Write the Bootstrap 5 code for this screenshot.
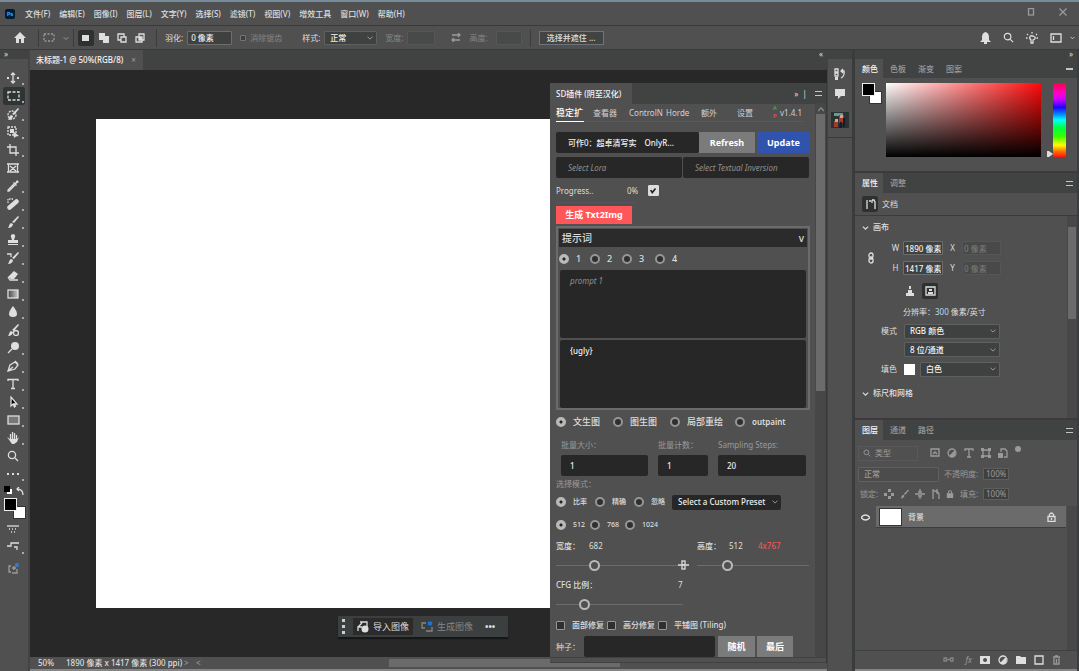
<!DOCTYPE html>
<html lang="zh-CN" data-bs-theme="dark">
<head>
<meta charset="utf-8">
<meta name="viewport" content="width=device-width, initial-scale=1">
<title>未标题-1 @ 50%(RGB/8)</title>
<link href="https://cdn.jsdelivr.net/npm/bootstrap@5.3.0/dist/css/bootstrap.min.css" rel="stylesheet">
<style>
:root{--panel:#505050;--bar:#414343;--ink:#282828;--line:#383b3b;--txt:#dedede;--dim:#9a9a9a}
body{font:8px/12px "Noto Sans","Noto Sans CJK SC",sans-serif;color:var(--txt);background:var(--panel);overflow:hidden}
a{color:inherit;text-decoration:none}
svg{display:block;flex:none;fill:none;stroke:currentColor;stroke-width:1.3}
svg .f{fill:currentColor;stroke:none}
svg.art path{stroke:none}
button{font:inherit;color:inherit;border:0;background:none;padding:0}
.w5{font-weight:500}.dimmed{color:var(--dim)}.faint{color:#858585}
.menubar{height:26px;border-top:2px solid #758b99;border-bottom:1px solid var(--line);padding-left:5px}
.menus{gap:9px;margin-left:10px}
.pslogo{width:10px;height:10px;border-radius:2px;background:#001d38;color:#36a5ff;font-size:6px;line-height:10px}
.optbar{height:24px;border-bottom:1px solid var(--line);padding-left:14px}
.sep{width:1px;height:18px;background:#3c3c3c}
.btn-ic{width:16px;height:16px;display:flex;align-items:center;justify-content:center;border-radius:2px}
.btn-ic.on{background:#2f3131}
.selmodes{gap:2px}
.form-control,.form-select{font-size:8px;line-height:12px;font-weight:500;padding:0 3px;min-height:0;height:14px;border-radius:1px;border:1px solid #6d6d6d;background-color:#3f4141;color:#f0f0f0}
.form-select{--bs-form-select-bg-img:url("data:image/svg+xml,%3csvg xmlns='http://www.w3.org/2000/svg' viewBox='0 0 8 8'%3e%3cpath d='M1 3l3 3 3-3' fill='none' stroke='%23bbb'/%3e%3c/svg%3e");background-size:6px;background-position:right 3px center;padding-left:5px;border-color:#5f6161}
.form-control:disabled{background:#484a4a;border-color:#565656;color:#777}
.form-control::placeholder{color:#8f8f8f;font-style:italic;font-weight:400}
.form-control.pct{width:26px;height:12px;padding:0 2px;color:#9a9a9a;font-weight:400;border-color:#5c605e}
.props .form-control{padding:0 1px}
.headbar{height:9px;background:var(--bar)}
.tabbar{background:var(--bar);height:20px;flex:none}
.ptab{padding:0 7px;display:flex;align-items:center;color:var(--dim);font-weight:500}
.ptab.on{background:var(--panel);color:#f5f5f5}
.burger{width:7px;height:5px;border:solid #c4c4c4;border-width:1px 0;margin-right:4px}
.toolbox{width:30px;border-right:2px solid #474245}
.toolbox button{width:22px;height:18px;margin-left:3px;padding-left:4px;position:relative;display:flex;align-items:center;border-radius:2px;flex:none}
.toolbox button.more::after{content:"";position:absolute;right:1px;bottom:2px;border:1px solid #aaa}
.toolbox button.on{background:#2f3434}
.fgbg{position:relative;width:22px;height:22px}
.fgbg i{position:absolute;width:13px;height:13px;border:1px solid #333}
.fgbg i:first-child{right:0;bottom:1px;background:#fff}
.fgbg i:last-child{left:0;top:0;background:#000;border-color:#eee}
.canvas{background:var(--ink);padding:49px 0 49px 66px}
.statusbar{height:14px;border-bottom:2px solid #858585;padding-left:8px}
.thumbbar{background:#6b6b6b;height:8px}
.ctxbar{position:absolute;left:308px;bottom:34px;height:21px;width:170px;background:#3c3f3f;box-shadow:0 2px 1px #171717;padding:0 4px;font-size:9px}
.grip{width:3px;height:15px;border-left:3px dotted #ccc}
.plugin{position:absolute;right:0;top:33px;bottom:8px;width:277px;background:var(--panel);border-right:1px solid var(--line)}
.plugin .body-area{padding:0 6px;width:265px;overflow:hidden}
.pgtabs{height:18px;border-bottom:1px solid #5d585d;margin-right:6px}
.pgtabs a{white-space:nowrap;line-height:17px;height:18px;color:#d0d0d0}
.pgtabs a.on{border-bottom:1px solid #fff;color:#fff;font-weight:500;font-size:9px}
.plugin .form-control.ink,.plugin .form-select.ink{background-color:#272727;border:0;border-radius:2px;padding-left:12px;height:21px}
.plugin .form-control.ink.narrow{padding-left:9px}
.plugin .btn{font-size:9px;line-height:12px;font-weight:700;padding:0;border:0;border-radius:0;color:#fff;height:21px;background:#7b7b7b}
.plugin .btn.blue{background:#3053ad}.plugin .btn.red{background:#ff5659;height:18px;width:76px}
.form-check-input{width:10px;height:10px;margin:0;flex:none;border:2px solid #969696;background:#2c3030}
.form-check-input[type=radio]:checked{background:radial-gradient(circle,#222 0 1px,#b9b9b9 2px);border-color:#b9b9b9}
.form-check-input[type=checkbox]{border-width:1px;border-radius:1px;width:9px;height:9px}
.form-check-input.lit{width:11px!important;height:11px!important}
.form-check-input.lit:checked{background:#dcdcdc url("data:image/svg+xml,%3csvg xmlns='http://www.w3.org/2000/svg' viewBox='0 0 11 11'%3e%3cpath d='M2 5l2 3 4-5' fill='none' stroke='%23222' stroke-width='2'/%3e%3c/svg%3e");border-color:#dcdcdc}
.rgrid{display:grid;align-items:center}
.rgrid label{font-weight:500;display:flex;align-items:center;gap:7px;white-space:nowrap}
.t7 label{font-size:7px}.t9 label{font-size:9px}
.pbox{border:2px solid #6b6b6b;height:184px;padding:1px;margin-right:-1px}
.pbox .hd{background:#2b2b2b;height:18px;font-size:10px;padding:0 3px}
.pbox textarea.form-control{background:#272727;border:0;border-radius:2px;height:68px;padding:5px 10px;resize:none;display:block;margin-left:1px;width:calc(100% - 2px)}
input[type=range]{appearance:none;background:none;height:12px;width:100%;margin:0;display:block}
input[type=range]::-webkit-slider-runnable-track{height:1px;background:#6a6e6a}
input[type=range]::-webkit-slider-thumb{appearance:none;width:11px;height:11px;margin-top:-5px;border:2px solid #bababa;border-radius:50%;background:var(--panel)}
.vscroll{position:absolute;right:0;top:20px;bottom:6px;width:11px;background:#474747;text-align:center}
.vscroll div{position:absolute;left:1px;right:1px;top:11px;height:50%;background:#6b6b6b}
.strip{width:28px;background:var(--bar);border-right:3px solid #3a3c3c}
.dock{width:224px;background:var(--panel);border-right:2px solid #3a3d3d}
.pnl{border-bottom:2px solid #3e393e}
.sv{height:74px;width:155px;background:linear-gradient(#0000,#000),linear-gradient(90deg,#fff,#ff0a0a)}
.hue{height:74px;width:13px;background:linear-gradient(#f04,#f0c 14%,#c0f 22%,#20f 33%,#08f 42%,#0ff 50%,#0f4 60%,#3f0 72%,#ff0 84%,#f70 92%,#f11)}
.form-select.mode{width:96px;height:15px}
.props{padding-left:7px}
.rowline{height:20px;display:flex;align-items:center}
.lab{width:36px;text-align:right;padding-right:7px;flex:none}
.layer{background:#6b6b6b;height:22px;border-bottom:1px solid #3d3d3d}
.vs2{position:absolute;right:0;top:0;bottom:0;width:10px;background:#484848}
.vs2 div{margin:11px 1px 0 1px;height:92px;background:#6b6b6b}
</style>
</head>
<body class="vh-100 d-flex flex-column">
<svg class="d-none">
<symbol id="chev" viewBox="0 0 8 8"><path d="M1 3l3 3 3-3"/></symbol>
<symbol id="search" viewBox="0 0 12 12"><circle cx="5" cy="5" r="3.6"/><path d="M8 8l3 3"/></symbol>
<symbol id="brush" viewBox="0 0 12 12"><path class="f" d="M11 0l1 1-5 6-2-1zM4 7l2 1c0 2-2 4-5 4 1-1 1-4 3-5z"/></symbol>
<symbol id="lock" viewBox="0 0 10 10"><path d="M3 5V3q0-2 2-2t2 2v2"/><path class="f" d="M1 4h8v6H1z"/></symbol>
<symbol id="half" viewBox="0 0 10 10"><circle cx="5" cy="5" r="4"/><path class="f" d="M8 2v6a4 4 0 0 1-6 0z"/></symbol>
<symbol id="chain" viewBox="0 0 8 12"><rect x="2" y="1" width="4" height="5" rx="2"/><rect x="2" y="6" width="4" height="5" rx="2"/><path d="M4 4v4"/></symbol>
</svg>

<header class="menubar d-flex align-items-center flex-shrink-0">
 <span class="pslogo text-center fw-bold">Ps</span>
 <nav class="menus d-flex w5 text-nowrap"><a href="#">文件(F)</a><a href="#">编辑(E)</a><a href="#">图像(I)</a><a href="#">图层(L)</a><a href="#">文字(Y)</a><a href="#">选择(S)</a><a href="#">滤镜(T)</a><a href="#">视图(V)</a><a href="#">增效工具</a><a href="#">窗口(W)</a><a href="#">帮助(H)</a></nav>
 <div class="ms-auto d-flex dimmed gap-4 pe-2 me-1 pb-1">
  <button aria-label="最大化"><svg width="8" height="8" viewBox="0 0 8 8"><rect x="1.500" y=".5" width="5" height="6.500"/></svg></button>
  <button aria-label="关闭"><svg width="8" height="8" viewBox="0 0 8 8"><path d="M.5.5l7 7m0-7l-7 7"/></svg></button>
 </div>
</header>

<div class="optbar d-flex align-items-center flex-shrink-0 text-nowrap">
 <button class="me-2" aria-label="主页"><svg width="12" height="12" viewBox="0 0 12 12"><path class="f" d="M6 0l6 6h-2v5H7V7H5v4H2V6H0z"/></svg></button>
 <span class="sep ms-1"></span>
 <button class="d-flex align-items-center gap-2 mx-1 dimmed" aria-label="矩形选框"><svg width="12" height="9" viewBox="0 0 12 9"><rect x="1" y="1" width="10" height="7" stroke-dasharray="2 1.500"/></svg><svg width="6" height="6"><use href="#chev"/></svg></button>
 <span class="sep"></span>
 <div class="selmodes d-flex ms-1">
  <button class="btn-ic on" aria-label="新选区"><svg width="8" height="8"><path class="f" d="M0 1h7v6H0z"/></svg></button>
  <button class="btn-ic" aria-label="添加到选区"><svg width="10" height="10"><path class="f" d="M0 0h6v3h4v7H4V7H0z"/></svg></button>
  <button class="btn-ic" aria-label="从选区减去"><svg width="10" height="10"><path d="M4 7H1V1h6v3M4 4h5v5H4z"/></svg></button>
  <button class="btn-ic" aria-label="与选区交叉"><svg width="10" height="10"><path d="M4 1h5v6H4zM1 4h6v5H1z"/><path class="f" d="M4 4h3v3H4z"/></svg></button>
 </div>
 <span class="sep mx-2"></span>
 <label for="feather" class="me-1">羽化:</label><input id="feather" class="form-control" style="width:45px" value="0 像素">
 <label class="d-flex gap-1 ms-2 align-items-center faint"><input type="checkbox" disabled class="form-check-input" style="width:6px;height:6px"> 消除锯齿</label>
 <label for="stl" class="ms-3 ps-1 me-1">样式:</label><select id="stl" class="form-select me-2" style="width:53px"><option>正常</option></select>
 <label for="ow" class="faint me-1">宽度:</label><input id="ow" disabled class="form-control" style="width:28px">
 <button class="ms-3 me-2 dimmed" aria-label="交换"><svg width="10" height="9" viewBox="0 0 10 9"><path d="M1 2h8M7 0l2 2-2 2M9 7H1m2-2L1 7l2 2"/></svg></button>
 <label for="oh" class="faint me-2">高度:</label><input id="oh" disabled class="form-control" style="width:26px">
 <span class="sep mx-2"></span>
 <button class="w5 border border-secondary text-center" style="width:65px;background:#424444">选择并遮住 ...</button>
 <div class="ms-auto d-flex align-items-center gap-2 pe-1">
  <button class="me-1" aria-label="通知"><svg width="11" height="12" viewBox="0 0 11 12"><path class="f" d="M5.500 0Q9 1 9 5v3l2 2H0l2-2V5q0-4 3.500-5zM4 10h3v2H4z"/></svg></button>
  <button class="me-1" aria-label="搜索"><svg width="11" height="11"><use href="#search"/></svg></button>
  <button class="me-1" aria-label="提示"><svg width="12" height="12" viewBox="0 0 12 12"><path d="M5 8Q3 6 4 4.500t4 0T7 8v3H5zM6 0v1.500M1 2l1 1M11 2l-1 1M0 6h1.500M10.500 6H12"/></svg></button>
  <button class="d-flex align-items-center gap-2" aria-label="工作区"><svg width="12" height="10"><path d="M1 1h10v8H1zM3.500 3v4"/></svg><svg width="5" height="5"><use href="#chev"/></svg></button>
 </div>
</div>

<main class="d-flex flex-fill" style="min-height:0">
 <aside class="toolbox d-flex flex-column flex-shrink-0">
  <div class="headbar ps-1" style="line-height:7px">»</div><div style="height:10px"></div>
  <button class="more" aria-label="移动"><svg width="12" height="12" viewBox="0 0 12 12"><path d="M6 1v10M4 3l2-2 2 2M4 9l2 2 2-2"/><path class="f" d="M0 5h2v2H0zM10 5h2v2h-2z"/></svg></button>
  <button class="more on" aria-label="选框"><svg width="13" height="10"><rect x="1" y="1" width="11" height="8" stroke-dasharray="3 1.500"/></svg></button>
  <button class="more" aria-label="快速选择"><svg width="12" height="12"><circle cx="5" cy="7" r="4" stroke-dasharray="2 1"/><use href="#brush" width="12" height="12"/></svg></button>
  <button class="more" aria-label="对象选择"><svg width="12" height="12"><rect x="1" y="1" width="8" height="8" stroke-dasharray="2 1"/><path class="f" d="M3 3h4v4H3zM6 5l6 5-3 .5L7 12z"/></svg></button>
  <button class="more" aria-label="裁剪"><svg width="12" height="12"><path d="M0 3h9v9M3 0v9h9"/></svg></button>
  <button aria-label="图框"><svg width="12" height="10"><path d="M0 1h12M0 9h12M1.500 1v8M10.500 1v8M3 3l6 5M9 3L3 8"/></svg></button>
  <button class="more" aria-label="吸管"><svg width="12" height="12"><path d="M7 4l-6 6v1h1l6-6"/><path class="f" d="M6 3l1-1 1 1 2-3 2 2-3 2 1 1-1 1z"/></svg></button>
  <button class="more" aria-label="修复"><svg width="12" height="12"><path d="M1 5V1h5" stroke-dasharray="1.500 1"/><path d="M2.500 9.500l7-6" stroke-width="4.500" stroke-linecap="round"/></svg></button>
  <button class="more" aria-label="画笔"><svg width="12" height="12"><use href="#brush"/></svg></button>
  <button class="more" aria-label="图章"><svg width="12" height="12"><path class="f" d="M6 0q3 1 2 3L7 6h4v3H1V6h4L4 3q-1-2 2-3zM1 10h10v1H1z"/></svg></button>
  <button class="more" aria-label="历史画笔"><svg width="12" height="12"><use href="#brush"/><path d="M0 2h4v3"/></svg></button>
  <button class="more" aria-label="橡皮擦"><svg width="12" height="12"><path class="f" d="M7 1l4 3-4 5H4L1 7z"/><path d="M1 7l2 3h8"/></svg></button>
  <button class="more" aria-label="渐变"><svg width="12" height="10"><defs><linearGradient id="gg"><stop stop-color="#444"/><stop offset="1" stop-color="#ccc"/></linearGradient></defs><rect x="1" y="1" width="10" height="8" style="fill:url(#gg)"/></svg></button>
  <button class="more" aria-label="模糊"><svg width="12" height="12"><path class="f" d="M6 0q4 5 4 8 0 3-4 3T2 8q0-3 4-8z"/></svg></button>
  <button aria-label="混合器"><svg width="12" height="12"><use href="#brush"/><circle cx="9" cy="9" r="2.500"/></svg></button>
  <button class="more" aria-label="减淡"><svg width="12" height="12"><circle class="f" cx="8" cy="4" r="4"/><path d="M5 7l-4 4"/></svg></button>
  <button class="more" aria-label="钢笔"><svg width="12" height="12"><path d="M1 11l2-6 5-3 3 3-3 4zM1 11l5-4"/><path d="M8 1l3 3"/></svg></button>
  <button class="more" aria-label="文字"><svg width="12" height="12"><path d="M1 3V1.500h10V3M6 1v10M4 10.500h4"/></svg></button>
  <button class="more" aria-label="选择"><svg width="12" height="12"><path style="fill:#000" d="M4 1v9l2-2 1.500 3 1-1-1.500-2h3z"/></svg></button>
  <button class="more" aria-label="矩形"><svg width="13" height="10"><rect x="1" y="1" width="11" height="8" style="fill:#777"/></svg></button>
  <button class="more" aria-label="抓手"><svg width="12" height="12"><path class="f" d="M0 5l3 2h7l2-2-2 5-3 2H5z"/><path d="M3.500 7V2M5.500 7V0M7.500 7V1M9.500 7V3"/></svg></button>
  <button aria-label="缩放"><svg width="12" height="12"><use href="#search"/></svg></button>
  <button class="more" aria-label="更多"><svg width="12" height="3"><path class="f" d="M0 0h2v2H0zM5 0h2v2H5zM10 0h2v2h-2z"/></svg></button>
  <div class="d-flex align-items-center justify-content-between px-1" style="height:15px"><svg width="9" height="9"><path style="fill:#fff" stroke="none" d="M3 3h5v5H3z"/><path style="fill:#000;stroke:none" d="M0 0h6v6H0z"/></svg><svg width="8" height="8"><path d="M7 8q0-6-6-6M3 0L1 2l2 2"/></svg></div>
  <div class="fgbg ms-1"><i></i><i></i></div>
  <button aria-label="快速蒙版"><svg width="12" height="9"><path d="M0 1h12"/><path d="M2 4h8M4 7h5" stroke-dasharray="1 2"/></svg></button>
  <button class="more" aria-label="屏幕模式"><svg width="12" height="10"><path d="M0 4h4V1h8M7 5h3v3"/></svg></button>
  <button class="dimmed mt-1" aria-label="生成"><svg width="13" height="12"><path d="M4 3H2v6h2M10 6v4H5M7 3v4M5 5h4"/><circle cx="10" cy="2" r="2.200" style="fill:#3b74b8;stroke:none"/></svg></button>
 </aside>

 <section class="flex-fill d-flex flex-column position-relative" style="min-width:0">
  <div class="tabbar d-flex"><a href="#" class="ptab on" style="padding-left:6px;width:113px">未标题-1 @ 50%(RGB/8) <span class="ms-2 dimmed">×</span></a><span class="ms-auto me-1" style="line-height:7px">«</span></div>
  <div class="canvas flex-fill"><div class="bg-white h-100"></div></div>
  <div class="ctxbar d-flex align-items-center gap-2">
   <span class="grip"></span>
   <button class="d-flex align-items-center gap-1 px-1" style="background:#2b2b2b;height:17px"><svg width="12" height="12"><path d="M3 1h7v5M1 6l4-4M1 10V6h4"/><circle class="f" cx="8" cy="8" r="3.500"/></svg>导入图像</button>
   <button class="d-flex align-items-center gap-1 faint"><svg width="12" height="12"><path d="M5 2H1v5h3M5 10h6V6"/><circle cx="9" cy="2.500" r="2.300" style="fill:#1473e6;stroke:none"/></svg>生成图像</button>
   <button class="ms-1 fw-bold" aria-label="更多选项">•••</button>
  </div>
  <footer class="statusbar d-flex align-items-center flex-shrink-0 w5">
   <span style="width:28px">50%</span><span style="width:118px">1890 像素 x 1417 像素 (300 ppi)</span><span class="dimmed" style="width:12px">&gt;</span><span class="dimmed">&lt;</span>
   <div class="flex-fill d-flex"><div style="width:30%"></div><div class="thumbbar" style="width:37%"></div></div>
  </footer>

  <section class="plugin d-flex flex-column">
   <div class="tabbar d-flex align-items-center" style="height:21px"><a href="#" class="ptab on h-100" style="padding-left:6px;width:82px">SD插件 (阴至汉化)</a><span class="ms-auto me-2">»&nbsp; |</span><span class="burger"></span></div>
   <div class="body-area flex-fill">
    <nav class="pgtabs d-flex"><a href="#" class="on" style="width:28px;margin-right:9px">稳定扩</a><a href="#" style="width:36px">查看器</a><a href="#" style="width:37px">ControlN</a><a href="#" style="width:35px">Horde</a><a href="#" style="width:36px">额外</a><a href="#" style="width:36px">设置</a><span style="width:7px;font-size:6px;line-height:8px;color:#ff5659"><span style="color:#53b26a">A</span><br>P</span><a href="#">v1.4.1</a></nav>
    <div class="d-flex" style="margin:10px -1px 0 0"><select aria-label="模型" class="form-select ink flex-fill" style="background-image:none"><option>可作0：超卓清写实　OnlyR...</option></select><button class="btn" style="width:56px;flex:none">Refresh</button><button class="btn blue" style="width:53px;flex:none;margin-left:2px">Update</button></div>
    <div class="d-flex" style="gap:1px;margin-top:4px"><input aria-label="Lora" class="form-control ink" placeholder="Select Lora"><input aria-label="Textual Inversion" class="form-control ink" placeholder="Select Textual Inversion"></div>
    <div class="rgrid" style="grid-template-columns:71px 21px 1fr;height:23px;margin-top:1px"><span>Progress..</span><span>0%</span><input type="checkbox" aria-label="预览" class="form-check-input lit" checked></div>
    <div style="width:80px;border-top:1px solid #5a535a;height:4px"></div>
    <button class="btn red d-block">生成 Txt2Img</button>
    <div class="pbox" style="margin-top:2px">
     <button class="hd d-flex w-100 align-items-center justify-content-between w5"><span>提示词</span><span>v</span></button>
     <div class="rgrid t9" style="grid-template-columns:31px 32px 33px 1fr;height:23px"><label><input type="radio" name="n" class="form-check-input" checked>1</label><label><input type="radio" name="n" class="form-check-input">2</label><label><input type="radio" name="n" class="form-check-input">3</label><label><input type="radio" name="n" class="form-check-input">4</label></div>
     <textarea aria-label="prompt" class="form-control" placeholder="prompt 1" style="margin-bottom:2px"></textarea>
     <textarea aria-label="negative prompt" class="form-control">{ugly}</textarea>
    </div>
    <div class="rgrid t9" style="grid-template-columns:57px 57px 65px 1fr;height:24px"><label><input type="radio" name="m" class="form-check-input" checked>文生图</label><label><input type="radio" name="m" class="form-check-input">图生图</label><label><input type="radio" name="m" class="form-check-input">局部重绘</label><label style="font-size:8px;font-weight:600"><input type="radio" name="m" class="form-check-input">outpaint</label></div>
    <div class="d-grid" style="grid-template-columns:87px 50px 88px;column-gap:10px;margin:5px 0 2px 5px"><label class="dimmed" for="bs" style="height:16px">批量大小：</label><label class="dimmed" for="bc">批量计数：</label><label class="dimmed text-nowrap" for="ss">Sampling Steps:</label><input id="bs" class="form-control ink narrow" value="1"><input id="bc" class="form-control ink narrow" value="1"><input id="ss" class="form-control ink narrow" value="20"></div>
    <div class="dimmed">选择模式：</div>
    <div class="rgrid t7" style="grid-template-columns:39px 39px 38px 109px;height:24px"><label><input type="radio" name="s" class="form-check-input" checked>比率</label><label><input type="radio" name="s" class="form-check-input">精确</label><label><input type="radio" name="s" class="form-check-input">忽略</label><select aria-label="预设" class="form-select ink" style="height:15px;padding-left:6px"><option>Select a Custom Preset</option></select></div>
    <div class="rgrid t7" style="grid-template-columns:34px 35px 1fr;height:22px"><label><input type="radio" name="r" class="form-check-input" checked>512</label><label><input type="radio" name="r" class="form-check-input">768</label><label><input type="radio" name="r" class="form-check-input">1024</label></div>
    <div class="rgrid" style="grid-template-columns:33px 108px 32px 29px 1fr;height:19px"><label for="wd">宽度：</label><span>682</span><label for="ht">高度：</label><span>512</span><span style="color:#ff5659">4x767</span></div>
    <div class="rgrid" style="grid-template-columns:122px 19px 1fr;height:20px"><input id="wd" type="range" value="30"><svg width="11" height="10" viewBox="0 0 11 10"><path d="M0 5h3M8 5h3"/><rect x="4" y="1" width="3" height="4"/><rect x="4" y="5" width="3" height="4"/></svg><input id="ht" type="range" value="25"></div>
    <div class="rgrid" style="grid-template-columns:122px 1fr;height:19px"><label for="cfg">CFG 比例：</label><span>7</span></div>
    <div style="width:127px;padding:4px 0"><input id="cfg" type="range" value="20"></div>
    <div class="rgrid" style="grid-template-columns:51px 51px 1fr;height:22px"><label><input type="checkbox" class="form-check-input">面部修复</label><label><input type="checkbox" class="form-check-input">高分修复</label><label><input type="checkbox" class="form-check-input">平铺图 (Tiling)</label></div>
    <div class="d-flex align-items-center"><label for="seed" style="width:28px;flex:none">种子：</label><input id="seed" class="form-control ink" style="width:131px"><button class="btn" style="width:37px;margin-left:3px">随机</button><button class="btn" style="width:36px;margin-left:2px">最后</button></div>
   </div>
   <div style="height:6px;border:solid #3e4242;border-width:1px 0;flex:none;margin-top:auto"></div>
   <div class="vscroll"><div></div><svg class="mx-auto mt-1" width="6" height="6" viewBox="0 0 6 6"><path d="M0 4l3-3 3 3" stroke="#888"/></svg></div>
  </section>
 </section>

 <aside class="strip flex-shrink-0 d-flex flex-column"><div class="headbar"></div>
  <div class="flex-fill d-flex flex-column align-items-center gap-2" style="background:var(--panel);padding-top:9px;margin-left:1px">
   <button aria-label="历史记录"><svg width="12" height="13"><path d="M1 1h3v3H1zM1 5h3v3H1z"/><path class="f" d="M1 9h3v3H1z"/><path d="M7 3h3q1 5-3 7M9 1L7 3l2 2"/></svg></button>
   <button aria-label="注释"><svg width="11" height="10"><path class="f" d="M0 0h10v7H6L3 10V7H0z"/></svg></button>
   <button aria-label="SD插件" class="mt-1"><svg class="art" width="18" height="18"><path fill="#293333" d="M0 1h18v16H0z"/><path fill="#6a9998" d="M3 2h9v3H3z"/><path fill="#a4382c" d="M8 4h5v8H8zM3 10h4v6H3z"/><path fill="#e7a06d" d="M9 4h3v3H9zM4 8h3v3H4z"/><path fill="#171a28" d="M9 11h2v6H8zM12 7h2v9h-2z"/></svg></button>
   <div class="w-100" style="border-top:1px solid #363a3a"></div>
  </div>
 </aside>

 <aside class="dock flex-shrink-0 d-flex flex-column">
  <div class="headbar text-end pe-1" style="line-height:7px">»</div>
  <section class="pnl" style="height:114px"><nav class="tabbar d-flex align-items-center" style="height:19px"><a href="#" class="ptab on h-100" style="padding-right:5px">颜色</a><a href="#" class="ptab">色板</a><a href="#" class="ptab" style="padding-left:5px">渐变</a><a href="#" class="ptab" style="padding-left:5px">图案</a><span class="burger ms-auto" style="height:2px"></span></nav>
   <div class="d-flex" style="padding:5px 0 0 7px"><div class="fgbg me-1" style="width:20px"><i></i><i></i></div><div class="sv"></div><div class="d-flex align-items-end" style="width:12px;padding-left:6px"><svg width="6" height="6"><path class="f" d="M0 0h2l4 3-4 3H0z"/></svg></div><div class="hue"></div></div></section>
  <section class="pnl d-flex flex-column" style="height:247px"><nav class="tabbar d-flex align-items-center"><a href="#" class="ptab on h-100" style="padding-right:5px">属性</a><a href="#" class="ptab">调整</a><span class="burger ms-auto"></span></nav>
   <div class="d-flex align-items-center props gap-1" style="height:23px;border-bottom:1px solid #3e393e"><span class="btn-ic on"><svg width="11" height="11"><path d="M2 1v9M4 2h2M7 1h2l1 2v7M7 1v3"/></svg></span>文档</div>
   <div class="position-relative flex-fill props">
    <div class="rowline w5" style="height:22px"><svg class="me-1" width="7" height="7"><use href="#chev"/></svg>画布</div>
    <div class="d-flex"><svg class="align-self-center" style="margin-left:5px" width="8" height="12"><use href="#chain"/></svg><div style="margin-left:13px">
     <div class="rowline"><label for="pw" style="width:15px" class="text-center">W</label><input id="pw" class="form-control" style="width:40px" value="1890 像素"><label for="px" style="width:19px" class="text-center">X</label><input id="px" disabled class="form-control" style="width:39px" value="0 像素"></div>
     <div class="rowline"><label for="ph" style="width:15px" class="text-center">H</label><input id="ph" class="form-control" style="width:40px" value="1417 像素"><label for="py" style="width:19px" class="text-center">Y</label><input id="py" disabled class="form-control" style="width:39px" value="0 像素"></div></div></div>
    <div class="d-flex align-items-center gap-1" style="height:26px;padding-left:40px"><button class="btn-ic" aria-label="纵向"><svg width="10" height="10"><path class="f" d="M4 0h2v3H4zM3 4h4v3h2v3H1V7h2z"/></svg></button><button class="btn-ic on" aria-label="横向"><svg width="11" height="10"><path d="M1 9V1h9v8z"/><path class="f" d="M4 3h3v2H4zM3 6h5v2H3z"/></svg></button></div>
    <div style="padding-left:41px;height:18px;line-height:16px">分辨率：<span style="color:#b5d9f5">300</span> 像素/英寸</div>
    <div class="rowline" style="height:18px"><label class="lab" for="md" style="width:42px">模式</label><select id="md" class="form-select mode"><option>RGB 颜色</option></select></div>
    <div class="rowline" style="height:19px;padding-left:42px"><select aria-label="位深度" class="form-select mode"><option>8 位/通道</option></select></div>
    <div class="rowline"><label class="lab" for="fc" style="width:42px">填色</label><span class="bg-white" style="width:11px;height:11px;margin-right:5px"></span><select id="fc" class="form-select" style="width:80px;height:15px"><option>白色</option></select></div>
    <div class="rowline w5" style="height:28px"><svg class="me-1" width="7" height="7"><use href="#chev"/></svg>标尺和网格</div>
    <div class="vs2"><div></div></div>
   </div></section>
  <section class="flex-fill d-flex flex-column"><nav class="tabbar d-flex align-items-center"><a href="#" class="ptab on h-100" style="padding-right:5px">图层</a><a href="#" class="ptab">通道</a><a href="#" class="ptab" style="padding-left:5px">路径</a><span class="burger ms-auto"></span></nav>
   <div class="dimmed d-flex align-items-center" style="height:26px;padding-left:3px"><label class="d-flex align-items-center gap-1 ps-1" style="width:60px;border:1px solid #5b585b;height:15px"><svg width="8" height="8" viewBox="0 0 12 12"><use href="#search"/></svg>类型</label>
    <div class="d-flex align-items-center ms-2 ps-1" style="gap:7px"><svg width="10" height="10"><path d="M1 1h8v7H1zM3 6l2-2 2 2"/></svg><svg width="10" height="10"><use href="#half"/></svg><svg width="10" height="10"><path d="M1 3V1h8v2M5 1v8M3 9h4"/></svg><svg width="10" height="10"><path d="M2 2h6v6H2z"/><path class="f" d="M0 0h3v3H0zM7 0h3v3H7zM0 7h3v3H0zM7 7h3v3H7z"/></svg><svg width="10" height="10"><path d="M3 4V1h4l2 2v6H6"/><path class="f" d="M0 5h5v5H0z"/></svg><svg class="mb-2" width="6" height="6"><circle class="f" cx="3" cy="3" r="3"/></svg></div></div>
   <div class="dimmed d-flex align-items-center" style="height:16px;padding-left:3px"><select aria-label="混合模式" disabled class="form-select" style="width:81px;background:#4c4c4c;color:#999;height:15px"><option>正常</option></select><label for="op" class="text-nowrap" style="width:44px;padding-left:5px">不透明度:</label><input id="op" class="form-control pct" value="100%"></div>
   <div class="dimmed d-flex align-items-center" style="height:24px;padding-left:5px"><span style="width:24px">锁定:</span><div class="d-flex align-items-center" style="gap:6px;width:76px"><svg width="10" height="10"><path class="f" d="M4 0h3v3H4zM0 4h3v3H0zM7 4h3v3H7zM4 7h3v3H4z"/></svg><svg width="9" height="10"><use href="#brush"/></svg><svg width="10" height="10"><path d="M0 5h10M5 0v3M5 7v3M3 3h4M3 7h4"/></svg><svg width="9" height="10"><path d="M2 0v10M2 2h4l2 3v5M6 0v5"/></svg><svg width="8" height="10"><use href="#lock"/></svg></div><label for="fl" style="width:23px">填充:</label><input id="fl" class="form-control pct" value="100%"></div>
   <div class="position-relative flex-fill"><div class="d-flex" style="margin-right:11px"><button class="d-flex justify-content-center align-items-center" style="width:21px" aria-label="可见性"><svg width="9" height="7"><path d="M0 3.500q4.500-5 9 0-4.500 5-9 0z"/></svg></button><div class="layer flex-fill d-flex align-items-center w5"><span class="bg-white" style="width:23px;height:18px;margin:0 6px 0 3px;border:1px solid #333"></span>背景<svg class="ms-auto" style="margin-right:10px" width="9" height="10" viewBox="0 0 9 10"><path d="M1 4.500h7v5H1zM2.500 4V2.500q2-3 4 0V4M4.500 6v2"/></svg></div></div><div class="vs2"></div></div>
   <footer class="d-flex align-items-center justify-content-end gap-2 pe-3" style="height:21px;border-top:1px solid #3c4242;border-bottom:2px solid #858585"><svg class="faint" width="11" height="6"><path d="M4 1H1v3h3M7 1h3v3H7M3 2.500h5"/></svg><i class="dimmed ms-1">fx</i><svg width="10" height="8"><path class="f" fill-rule="evenodd" d="M0 0h10v8H0zM5 2a2 2 0 1 0 .1 0z"/></svg><svg width="10" height="10"><use href="#half"/></svg><svg width="10" height="8"><path class="f" d="M0 0h4l1 1h5v7H0z"/></svg><svg width="10" height="10"><path d="M1 1h8v8H1z"/></svg><svg class="dimmed" width="9" height="10"><path d="M1 2h7M3 1h3M2 3v6h5V3M4.500 4v4"/></svg></footer>
  </section>
 </aside>
</main>
<script src="https://cdn.jsdelivr.net/npm/bootstrap@5.3.0/dist/js/bootstrap.bundle.min.js"></script>
</body>
</html>
